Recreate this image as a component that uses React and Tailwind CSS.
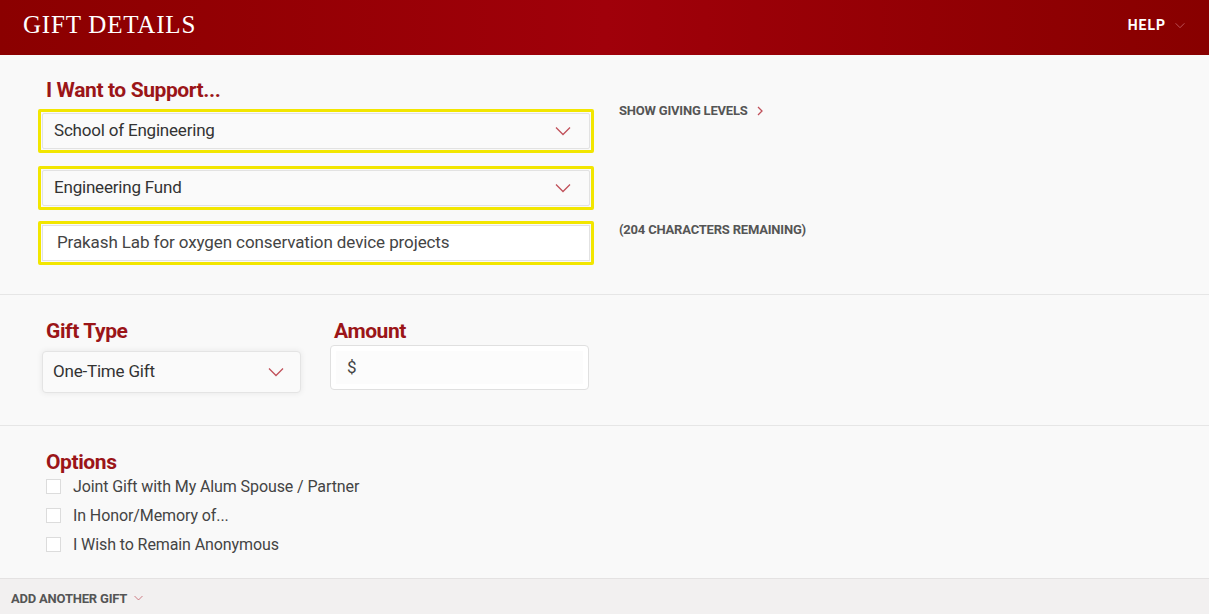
import React from 'react';

const font = { fontFamily: 'Roboto, "Liberation Sans", sans-serif' };

const Chevron = ({ className = '' }) => (
  <svg viewBox="0 0 16 10" className={className} fill="none" stroke="currentColor" strokeWidth="1.3">
    <path d="M1 1.5 L8 8.5 L15 1.5" />
  </svg>
);

const SelectBox = ({ label }) => (
  <div className="border-[3px] border-[#f2e600] rounded-[2px] p-px">
    <div className="h-[36px] bg-[#fafafa] border border-[#e2e2e2] rounded-[2px] flex items-center justify-between pl-[11px] pr-[18px]">
      <span className="text-[17px] text-[#333] tracking-[-0.2px]">{label}</span>
      <Chevron className="w-[16px] h-[10px] text-[#c0505a]" />
    </div>
  </div>
);

const Check = ({ label }) => (
  <label className="flex items-center gap-[12px] h-[29px]">
    <span className="w-[15px] h-[15px] bg-white border border-[#dcdcdc]" />
    <span className="text-[16px] text-[#444] tracking-[-0.1px]">{label}</span>
  </label>
);

export default function App() {
  return (
    <div className="w-[1209px] h-[614px] bg-[#f9f9f9] flex flex-col overflow-hidden" style={font}>
      {/* Header */}
      <div className="h-[55px] shrink-0 bg-gradient-to-r from-[#8b0000] via-[#a0000a] to-[#880000] flex items-center justify-between pl-[23px] pr-[24px] pb-[5px]">
        <h1 className="text-white text-[25px] tracking-[0.8px]" style={{ fontFamily: '"Liberation Serif", serif' }}>
          GIFT DETAILS
        </h1>
        <div className="flex items-center gap-[9px]">
          <span className="text-white text-[14px] font-bold tracking-[1px]">HELP</span>
          <Chevron className="w-[10px] h-[7px] text-[#c8636b]" />
        </div>
      </div>

      {/* Support section */}
      <div className="flex gap-[25px] pl-[38px] pt-[24px] pb-[29px] border-b border-[#e6e6e6]">
        <div className="w-[556px] flex flex-col">
          <h2 className="ml-[8px] text-[21px] font-bold text-[#9b1518] tracking-[-0.4px] leading-[22px] mb-[8px]">I Want to Support...</h2>
          <SelectBox label="School of Engineering" />
          <div className="h-[13px]" />
          <SelectBox label="Engineering Fund" />
          <div className="h-[11px]" />
          <div className="border-[3px] border-[#f2e600] rounded-[2px] p-px">
            <div className="h-[36px] bg-white border border-[#e2e2e2] flex items-center pl-[14px]">
              <span className="text-[17px] text-[#444] tracking-[-0.1px]">Prakash Lab for oxygen conservation device projects</span>
            </div>
          </div>
        </div>
        <div className="flex flex-col pt-[22px]">
          <div className="flex items-center gap-[9px]">
            <span className="text-[13px] font-bold text-[#555] tracking-[-0.2px]">SHOW GIVING LEVELS</span>
            <svg viewBox="0 0 6 10" className="w-[6px] h-[10px] text-[#c0505a]" fill="none" stroke="currentColor" strokeWidth="1.3">
              <path d="M1 1 L5 5 L1 9" />
            </svg>
          </div>
          <span className="mt-[99px] text-[13px] font-bold text-[#555] tracking-[-0.2px]">(204 CHARACTERS REMAINING)</span>
        </div>
      </div>

      {/* Gift type / amount */}
      <div className="flex gap-[29px] pl-[42px] pt-[25px] pb-[32px] border-b border-[#e6e6e6]">
        <div className="w-[259px] flex flex-col">
          <h2 className="ml-[4px] text-[21px] font-bold text-[#9b1518] tracking-[-0.4px] leading-[22px] mb-[9px]">Gift Type</h2>
          <div className="h-[42px] bg-[#fafafa] border border-[#e4e4e4] rounded-[4px] shadow-[0_0_6px_rgba(0,0,0,0.08)] flex items-center justify-between pl-[10px] pr-[16px]">
            <span className="text-[17px] text-[#333] tracking-[-0.2px]">One-Time Gift</span>
            <Chevron className="w-[16px] h-[10px] text-[#c0505a]" />
          </div>
        </div>
        <div className="w-[259px] flex flex-col">
          <h2 className="ml-[4px] text-[21px] font-bold text-[#9b1518] tracking-[-0.4px] leading-[22px] mb-[3px]">Amount</h2>
          <div className="h-[45px] bg-white border border-[#e0e0e0] rounded-[4px] flex items-center p-[5px]">
            <div className="w-full h-full bg-[#fcfcfc] flex items-center pl-[11px]">
              <span className="text-[17px] text-[#444]">$</span>
            </div>
          </div>
        </div>
      </div>

      {/* Options */}
      <div className="flex-1 pl-[46px] pt-[25px]">
        <h2 className="text-[21px] font-bold text-[#9b1518] tracking-[-0.4px] leading-[22px] -mb-[1px]">Options</h2>
        <Check label="Joint Gift with My Alum Spouse / Partner" />
        <Check label="In Honor/Memory of..." />
        <Check label="I Wish to Remain Anonymous" />
      </div>

      {/* Footer */}
      <div className="h-[36px] shrink-0 bg-[#f2f0f0] border-t border-[#e4e2e2] flex items-center gap-[7px] pl-[11px]">
        <span className="text-[13px] font-bold text-[#555] tracking-[-0.2px] mt-[4px]">ADD ANOTHER GIFT</span>
        <Chevron className="w-[9px] h-[6px] text-[#c0505a] mt-[3px]" />
      </div>
    </div>
  );
}
